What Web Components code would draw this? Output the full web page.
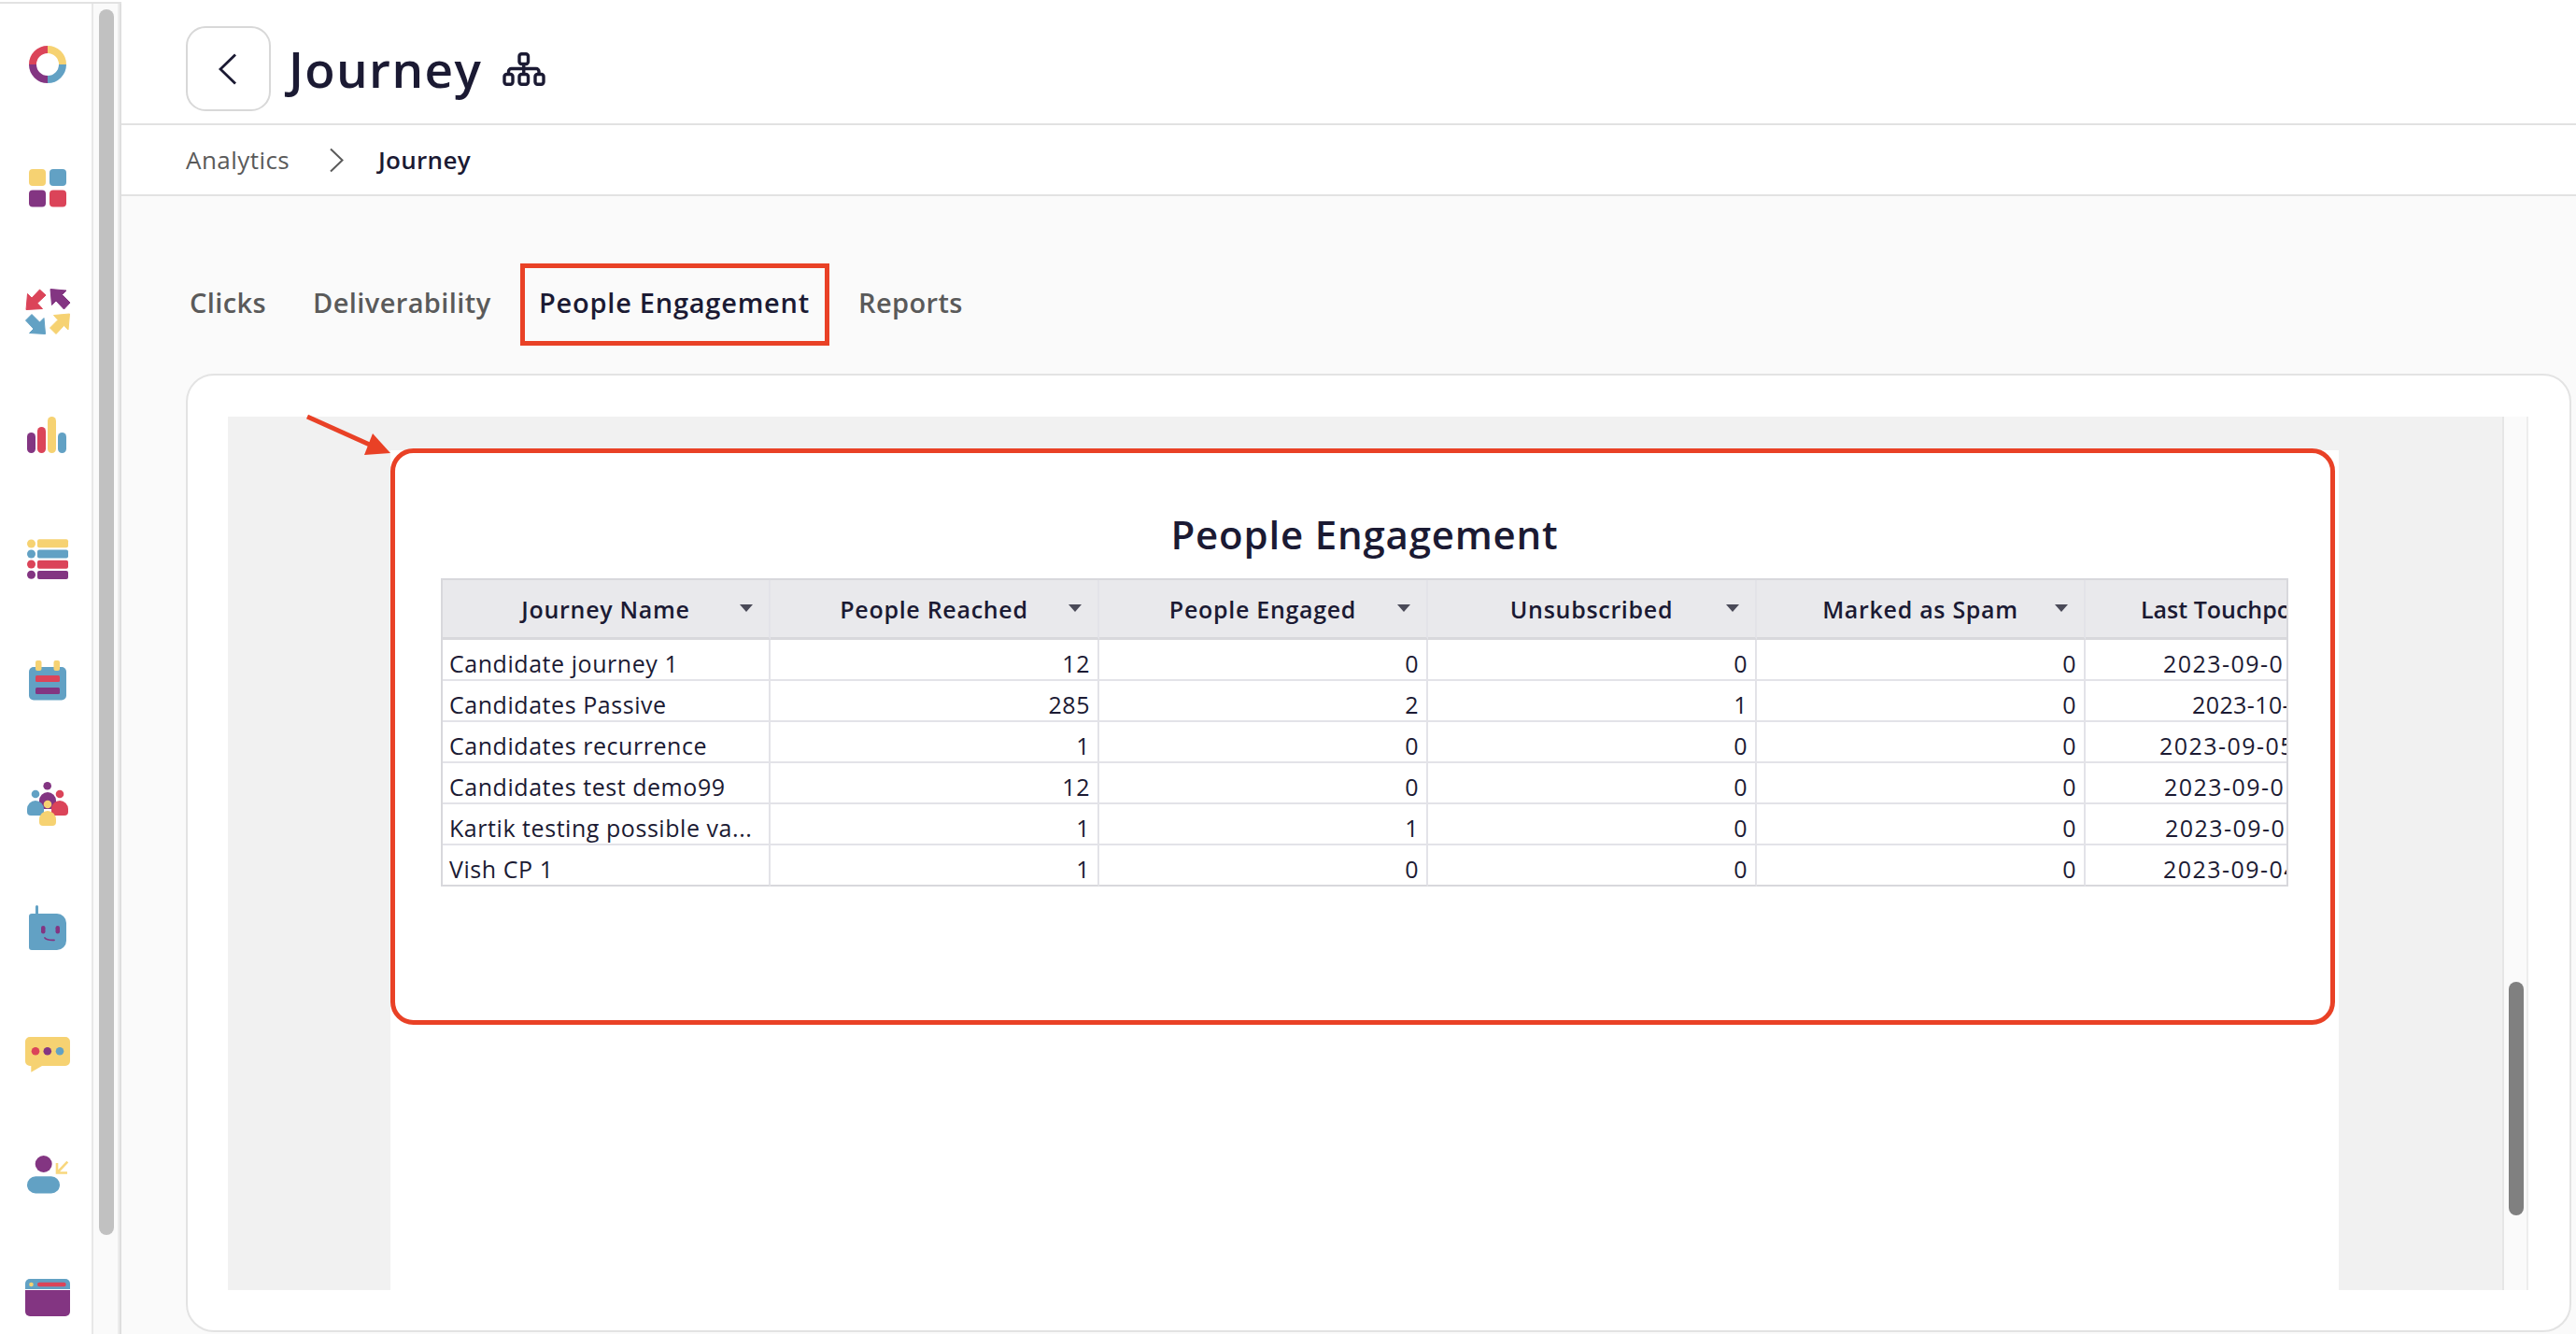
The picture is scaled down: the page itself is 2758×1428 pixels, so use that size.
<!DOCTYPE html>
<html lang="en">
<head>
<meta charset="utf-8">
<title>Journey</title>
<style>
html,body{margin:0;padding:0;width:2758px;height:1428px;overflow:hidden;background:#fff;font-family:"Open Sans","Noto Sans",sans-serif;color:#1b1a33}
</style>
</head>
<body>
<journey-app>
  <side-rail slot="rail"></side-rail>
  <page-header slot="head">Journey</page-header>
  <bread-crumbs slot="head" parent="Analytics" current="Journey"></bread-crumbs>
  <tab-bar slot="body">
    <tab-item style="--w:79px">Clicks</tab-item>
    <tab-item style="--w:189px">Deliverability</tab-item>
    <tab-item active style="--w:289px">People Engagement</tab-item>
    <tab-item style="--w:109px">Reports</tab-item>
  </tab-bar>
  <report-card slot="body">
    <h2 slot="title">People Engagement</h2>
    <data-table></data-table>
  </report-card>
</journey-app>
<annot-layer></annot-layer>
<template id="rail-t">
<style>
:host{display:flex;width:130px;height:1428px;box-sizing:border-box;padding-top:2px;overflow:hidden;flex:none}
.wrap{display:flex;flex:1;border-top:2px solid #e2e2e2;min-height:0}
nav{width:98px;flex:none;display:flex;flex-direction:column;background:#fff}
svg{display:block;width:98px;height:132px;flex:none}
.track{flex:none;background:#fafafa;border-left:2px solid #e8e8e8;padding:6px 0 0 6px;width:20px;border-right:2px solid #ececec;}
.thumb{width:16px;height:1312px;background:#c1c1c1;border-radius:8px}
.edge{width:2px;flex:none;background:#dedede}
</style>
<div class="wrap">
<nav>
<svg viewBox="0 4 98 132" fill="none"><g stroke-width="8"><path d="M51 53a16 16 0 0 1 16 16" stroke="#f6d272"/><path d="M67 69a16 16 0 0 1-16 16" stroke="#62a1c4"/><path d="M51 85a16 16 0 0 1-16-16" stroke="#833582"/><path d="M35 69a16 16 0 0 1 16-16" stroke="#db4459"/></g></svg>
<svg viewBox="0 136 98 132"><rect x="31" y="181" width="18" height="18" rx="4" fill="#f6d272"/><rect x="53" y="181" width="18" height="18" rx="4" fill="#62a1c4"/><rect x="31" y="203.500" width="18" height="18" rx="4" fill="#833582"/><rect x="53" y="203.500" width="18" height="18" rx="4" fill="#db4459"/></svg>
<svg viewBox="0 268 98 132" stroke-linejoin="round" stroke-width="1"><path d="M28 331.500L29.500 314.500L34 319L42.500 310L49 316L40 324.500L45.500 330.500Z" fill="#db4459" stroke="#db4459"/><path d="M54 309.500L71 311L66.500 315.500L75 324L68.500 331L60 322L55.500 326.500Z" fill="#833582" stroke="#833582"/><path d="M48.500 357.500L31.500 356.500L36 352L27.500 343L34 336.500L42.500 345L47 340.500Z" fill="#62a1c4" stroke="#62a1c4"/><path d="M74.500 336L73 353L68.500 348.500L60 357.500L53.500 351L62 342.500L57.500 337.500Z" fill="#f6d272" stroke="#f6d272"/></svg>
<svg viewBox="0 400 98 132"><rect x="29" y="463" width="9" height="22" rx="4.500" fill="#833582"/><rect x="40" y="457" width="9" height="28" rx="4.500" fill="#db4459"/><rect x="51" y="446" width="9" height="39" rx="4.500" fill="#f6d272"/><rect x="62" y="463" width="9" height="22" rx="4.500" fill="#62a1c4"/></svg>
<svg viewBox="0 532 98 132"><circle cx="33.500" cy="582" r="4.500" fill="#f6d272"/><rect x="40" y="577.300" width="33" height="9" rx="2" fill="#f6d272"/><circle cx="33.500" cy="593" r="4.500" fill="#62a1c4"/><rect x="40" y="588.500" width="33" height="9" rx="2" fill="#62a1c4"/><circle cx="33.500" cy="604" r="4.500" fill="#db4459"/><rect x="40" y="599.700" width="33" height="9" rx="2" fill="#db4459"/><circle cx="33.500" cy="615.300" r="4.500" fill="#833582"/><rect x="40" y="611" width="33" height="9" rx="2" fill="#833582"/></svg>
<svg viewBox="0 664 98 132"><rect x="31" y="714" width="40" height="35.500" rx="5" fill="#62a1c4"/><rect x="38" y="707" width="6.500" height="11" rx="2" fill="#f6d272"/><rect x="57.500" y="707" width="6.500" height="11" rx="2" fill="#f6d272"/><rect x="38" y="723" width="26" height="7" rx="1.500" fill="#db4459"/><rect x="38" y="736" width="26" height="7" rx="1.500" fill="#833582"/></svg>
<svg viewBox="0 796 98 132"><circle cx="50.700" cy="841.300" r="4.300" fill="#833582"/><path d="M42 866v-9a9 9 0 0 1 18 0v9z" fill="#833582"/><circle cx="38" cy="850" r="4.300" fill="#62a1c4"/><path d="M29 869v-3a9 9 0 0 1 18 0v7H33a4 4 0 0 1-4-4z" fill="#62a1c4"/><circle cx="64" cy="850" r="4.300" fill="#db4459"/><path d="M73 869v-3a9 9 0 0 0-18 0v7H69a4 4 0 0 0 4-4z" fill="#db4459"/><circle cx="51" cy="861" r="4.300" fill="#f6d272"/><path d="M42 880v-3a9 9 0 0 1 18 0v3a4 4 0 0 1-4 4H46a4 4 0 0 1-4-4z" fill="#f6d272"/></svg>
<svg viewBox="0 928 98 132"><path d="M38 978v-7.500a1.500 1.500 0 0 1 3 0V978h20a10 10 0 0 1 10 10v19a10 10 0 0 1-10 10H34a3 3 0 0 1-3-3V981a3 3 0 0 1 3-3z" fill="#62a1c4"/><rect x="44" y="991" width="4.500" height="8.500" rx="2.250" fill="#833582"/><rect x="59.500" y="991" width="4.500" height="8.500" rx="2.250" fill="#833582"/><path d="M48 1004c2 2.200 6 2.500 10 2.300" stroke="#833582" stroke-width="1.800" fill="none" stroke-linecap="round"/></svg>
<svg viewBox="0 1060 98 132"><path d="M32 1110h38a5 5 0 0 1 5 5v21a5 5 0 0 1-5 5H45l-11.700 6.700V1141H32a5 5 0 0 1-5-5v-21a5 5 0 0 1 5-5z" fill="#f6d272"/><circle cx="38" cy="1125.300" r="4.300" fill="#db4459"/><circle cx="50.800" cy="1125.300" r="4.300" fill="#833582"/><circle cx="64" cy="1125.300" r="4.300" fill="#62a1c4"/></svg>
<svg viewBox="0 1192 98 132"><circle cx="46.700" cy="1246" r="9" fill="#833582"/><rect x="29" y="1259.300" width="35" height="18.200" rx="9.100" fill="#62a1c4"/><path d="M72.300 1243.700L61.500 1255M61 1245v10.500h11" stroke="#f8d77e" stroke-width="2.600" fill="none"/></svg>
<svg viewBox="0 1324 98 132"><path d="M32 1369h38a5 5 0 0 1 5 5v6H27v-6a5 5 0 0 1 5-5z" fill="#62a1c4"/><path d="M27 1381h48v23a5 5 0 0 1-5 5H32a5 5 0 0 1-5-5z" fill="#833582"/><circle cx="33.500" cy="1375" r="2.300" fill="#f6d272"/><rect x="40" y="1372.700" width="30.700" height="4.600" rx="2.300" fill="#db4459"/></svg>
</nav>
<div class="track"><div class="thumb"></div></div>
<div class="edge"></div>
</div>
</template>
<template id="head-t">
<style>
:host{display:flex;align-items:flex-start;box-sizing:border-box;height:134px;padding:28px 0 0 69px;border-bottom:2px solid #e2e2e2;background:#fff}
button{width:91px;height:91px;box-sizing:border-box;border:2px solid #d8d8d8;border-radius:21px;background:#fff;padding:0;display:flex;align-items:center;justify-content:center;flex:none}
h1{margin:0 0 0 19px;width:209px;font:600 53px/91px "Open Sans",sans-serif;color:#1b1a33;letter-spacing:1.4px;white-space:nowrap}
.org{margin:28px 0 0 20px;flex:none}
</style>
<button aria-label="Back"><svg width="24" height="36" viewBox="0 0 24 36" fill="none"><path d="M20 2.500L4 18l16 15.500" stroke="#1b1a33" stroke-width="2.800" transform="translate(-1 0)"/></svg></button>
<h1><slot></slot></h1>
<svg class="org" width="46" height="36" viewBox="0 0 46 36" fill="none" stroke="#1b1a33" stroke-width="3.400"><rect x="18" y="1.700" width="9.500" height="10.800" rx="2.500"/><rect x="2" y="23.500" width="9" height="10.800" rx="2.500"/><rect x="18" y="23.500" width="9.500" height="10.800" rx="2.500"/><rect x="35" y="23.500" width="9" height="10.800" rx="2.500"/><path d="M22.750 12.500V23.500M6.500 23.500v-3a3 3 0 0 1 3-3h26.500a3 3 0 0 1 3 3v3"/></svg>
</template>
<template id="crumb-t">
<style>
:host{display:flex;align-items:center;box-sizing:border-box;height:76px;padding:0 0 0 69px;border-bottom:2px solid #e2e2e2;background:#fff;font:500 26px/1 "Open Sans",sans-serif}
.p{color:#5a5a5a;width:111px;letter-spacing:.45px}
.c{color:#1b1a33;font-weight:600;letter-spacing:.3px}
svg{margin:0 36px 0 42px;flex:none}
</style>
<span class="p"></span>
<svg width="17" height="27" viewBox="0 0 17 27" fill="none"><path d="M2 1.500L14.500 13.500 2 25.500" stroke="#5a5a5a" stroke-width="2"/></svg>
<span class="c"></span>
</template>
<template id="tabs-t">
<style>
:host{display:flex;align-items:center;gap:53px;height:190px;box-sizing:border-box;padding:38px 0 0 73px;background:transparent}
</style>
<slot></slot>
</template>
<template id="tab-t">
<style>
:host{display:block;width:var(--w);font:600 29px/40px "Open Sans",sans-serif;color:#5a5a5a;white-space:nowrap;letter-spacing:.4px}
:host([active]){color:#1b1a33;letter-spacing:.75px}
</style>
<slot></slot>
</template>
<template id="card-t">
<style>
:host{display:flex;box-sizing:border-box;width:2554px;height:1026px;margin:0 0 0 69px;padding:44px 44px 43px 43px;background:#fff;border:2px solid #e3e3e3;border-radius:30px}
.stage{flex:1;display:flex;background:#f1f1f1;min-width:0;overflow:hidden}
.sheet{margin:36px 0 0 174px;width:2086px;box-sizing:border-box;background:#fff;padding:0 54px;flex:none}
.gray{flex:1}
.track{width:24px;flex:none;background:#fafafa;border-left:2px solid #e6e6e6;border-right:2px solid #ededed}
.thumb{width:16px;height:250px;margin:605px 0 0 5px;background:#808080;border-radius:8px}
::slotted(h2){margin:0;padding:64px 0 22px;font:600 42px/51px "Open Sans",sans-serif;text-align:center;color:#1b1a33;letter-spacing:.8px}
</style>
<div class="stage">
<div class="sheet"><slot name="title"></slot><slot></slot></div>
<div class="gray"></div>
<div class="track"><div class="thumb"></div></div>
</div>
</template>
<template id="table-t">
<style>
:host{display:block;width:1978px;box-sizing:border-box;border:2px solid #d8d8dc;border-bottom:0;overflow:hidden;font:400 25px/1 "Open Sans",sans-serif;color:#1b1a33}
.g{display:grid;grid-template-columns:351px repeat(4,352px) 1fr}
.h,.c{box-sizing:border-box;border-right:2px solid #e3e3e8;white-space:nowrap;overflow:hidden}
.h{height:64px;background:#e9e9ec;border-bottom:3px solid #d8d8dc;font-weight:600;position:relative;text-align:center;line-height:62px;letter-spacing:.7px}
.h i{position:absolute;right:17px;top:26px;width:0;height:0;border-left:7px solid transparent;border-right:7px solid transparent;border-top:8px solid #4a4a58}
.h.lastH{border-right:0;text-align:left;padding-left:59px;letter-spacing:0}
.c{height:44px;border-bottom:2px solid #e3e3e8;line-height:50px;padding:0 8px 0 7px;letter-spacing:.55px}
.n{text-align:right}
.last{border-right:0;text-align:left;padding-right:0;letter-spacing:1.45px}
.end{border-bottom-color:#d8d8dc}
</style>
<div class="g"></div>
</template>
<script>
function def(name,tid,init){customElements.define(name,class extends HTMLElement{constructor(){super();const r=this.attachShadow({mode:'open'});r.appendChild(document.getElementById(tid).content.cloneNode(true));}connectedCallback(){init&&init.call(this,this.shadowRoot)}})}
customElements.define('journey-app',class extends HTMLElement{constructor(){super();this.attachShadow({mode:'open'}).innerHTML=`<style>:host{display:flex;width:2758px;height:1428px;overflow:hidden}main{flex:1;display:flex;flex-direction:column;min-width:0;background:#fafafa}</style><slot name="rail"></slot><main><slot name="head"></slot><slot name="body"></slot></main>`}});
def('side-rail','rail-t');
def('page-header','head-t');
def('bread-crumbs','crumb-t',function(r){r.querySelector('.p').textContent=this.getAttribute('parent');r.querySelector('.c').textContent=this.getAttribute('current')});
def('tab-bar','tabs-t');
def('tab-item','tab-t');
def('report-card','card-t');
const heads=['Journey Name','People Reached','People Engaged','Unsubscribed','Marked as Spam'];
const rows=[['Candidate journey 1',12,0,0,0,'2023-09-0',83],['Candidates Passive',285,2,1,0,'2023-10-',114,.4],['Candidates recurrence',1,0,0,0,'2023-09-05',79],['Candidates test demo99',12,0,0,0,'2023-09-0',84],['Kartik testing possible va...',1,1,0,0,'2023-09-0',85],['Vish CP 1',1,0,0,0,'2023-09-04',83]];
def('data-table','table-t',function(r){const g=r.querySelector('.g');let h='';heads.forEach(t=>h+=`<div class="h">${t}<i></i></div>`);h+=`<div class="h lastH">Last Touchpo</div>`;rows.forEach((w,i)=>{const e=i==rows.length-1?' end':'';w.slice(0,5).forEach((v,j)=>h+=`<div class="c${j?' n':''}${e}">${v}</div>`);h+=`<div class="c last${e}" style="padding-left:${w[6]}px${w[7]?';letter-spacing:'+w[7]+'px':''}">${w[5]}</div>`});g.innerHTML=h});
customElements.define('annot-layer',class extends HTMLElement{constructor(){super();this.attachShadow({mode:'open'}).innerHTML=`<style>:host{position:absolute;left:0;top:0;width:2758px;height:1428px;pointer-events:none}svg{display:block}</style><svg width="2758" height="1428" fill="none" stroke="#e94126" stroke-width="5"><rect x="559.500" y="284.500" width="326" height="83"/><rect x="420.500" y="482.500" width="2077" height="612" rx="22"/><path d="M329 446L398 477"/><path d="M418 485L399 464 390 487Z" fill="#e94126" stroke="none"/></svg>`}});
</script>
</body>
</html>
